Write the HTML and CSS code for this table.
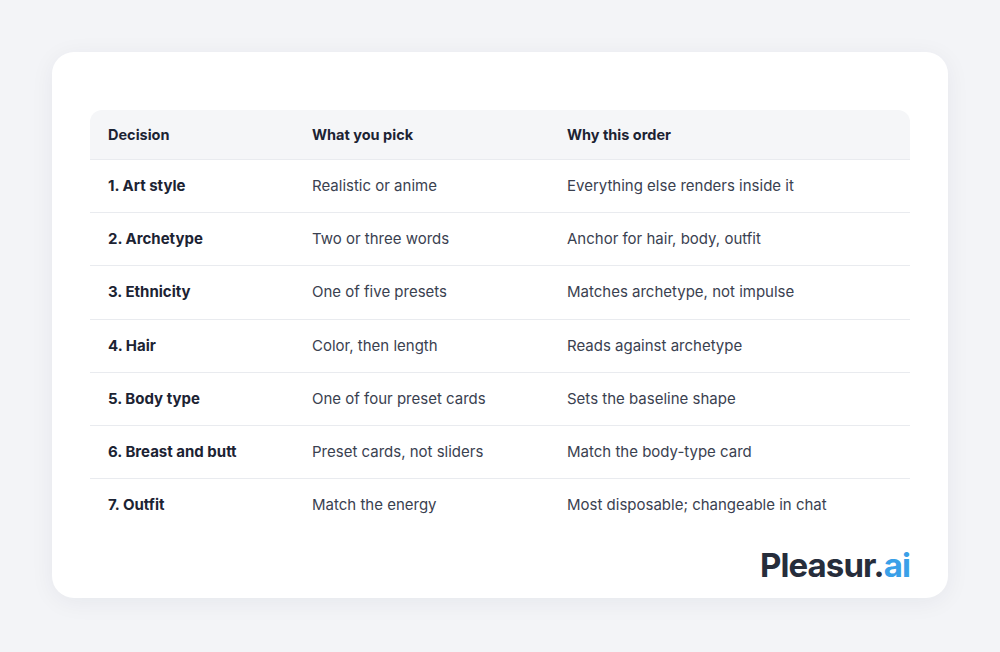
FILE: index.html
```html
<!DOCTYPE html>
<html>
<head>
<meta charset="utf-8">
<link rel="stylesheet" href="styles.css">
</head>
<body>
<div class="page">
  <div class="card">
    <table class="tbl">
      <thead>
        <tr><th class="c1">Decision</th><th class="c2">What you pick</th><th>Why this order</th></tr>
      </thead>
      <tbody>
        <tr><td class="k">1. Art style</td><td>Realistic or anime</td><td>Everything else renders inside it</td></tr>
        <tr><td class="k">2. Archetype</td><td>Two or three words</td><td>Anchor for hair, body, outfit</td></tr>
        <tr><td class="k">3. Ethnicity</td><td>One of five presets</td><td>Matches archetype, not impulse</td></tr>
        <tr><td class="k">4. Hair</td><td>Color, then length</td><td>Reads against archetype</td></tr>
        <tr><td class="k">5. Body type</td><td>One of four preset cards</td><td>Sets the baseline shape</td></tr>
        <tr><td class="k">6. Breast and butt</td><td>Preset cards, not sliders</td><td>Match the body-type card</td></tr>
        <tr><td class="k">7. Outfit</td><td>Match the energy</td><td>Most disposable; changeable in chat</td></tr>
      </tbody>
    </table>
    <div class="brand">Pleasur<span class="dot">.</span><span class="ai">ai</span></div>
  </div>
</div>
</body>
</html>
```
FILE: styles.css
```css
html, body { margin: 0; padding: 0; }
body {
  background: #f3f4f7;
  font-family: Inter, "Noto Sans", sans-serif;
  width: 1000px;
  height: 652px;
  overflow: hidden;
}
.page { padding: 52px; }
.card {
  background: #ffffff;
  border-radius: 22px;
  width: 896px;
  height: 546px;
  box-sizing: border-box;
  padding: 58px 38px 0 38px;
  box-shadow: 0 4px 24px rgba(20, 30, 60, 0.06);
}
.tbl {
  width: 820px;
  border-collapse: separate;
  border-spacing: 0;
}
.tbl th {
  background: #f5f6f8;
  text-align: left;
  font-weight: 700;
  font-size: 14.5px;
  color: #1c2333;
  height: 49px;
  padding: 0 18px;
  border-bottom: 1px solid #e9ebef;
}
.tbl th:first-child { border-top-left-radius: 12px; }
.tbl th:last-child { border-top-right-radius: 12px; }
.tbl th.c1 { width: 168px; }
.tbl th.c2 { width: 219px; }
.tbl td {
  height: 51.2px;
  padding: 0 18px 1px 18px;
  font-size: 15px;
  color: #3a4150;
  border-bottom: 1px solid #e9ebef;
}
.tbl tr:last-child td { border-bottom: none; }
.tbl td.k { font-weight: 650; color: #1c2333; }
.brand {
  margin-top: 14px;
  text-align: right;
  font-size: 33px;
  font-weight: 700;
  color: #262d3b;
  letter-spacing: -0.9px;
}
.brand .ai { color: #3aa0e8; }
```
